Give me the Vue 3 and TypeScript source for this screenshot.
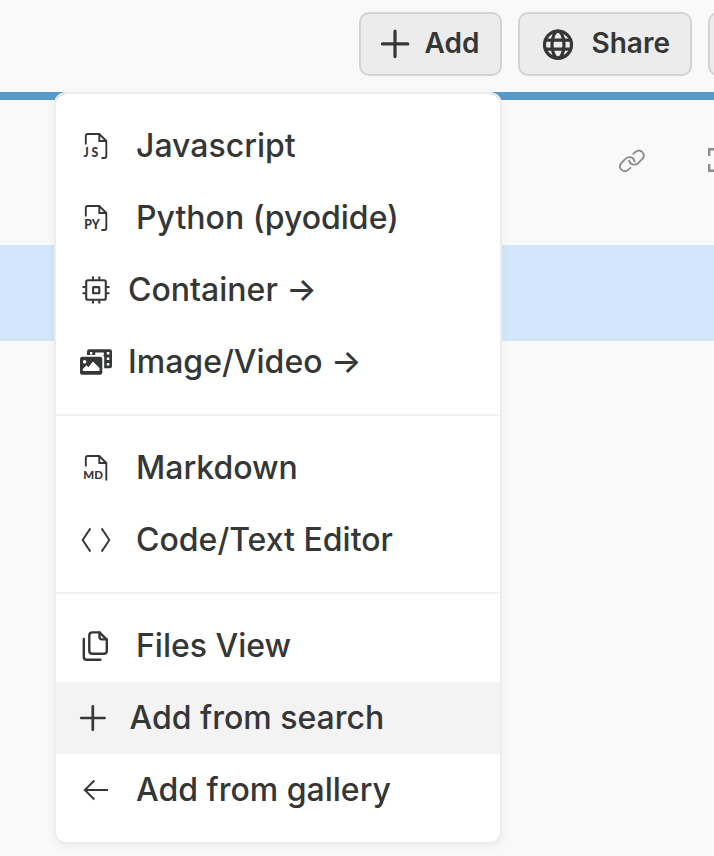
<script setup lang="ts">
type IconName = 'js' | 'py' | 'chip' | 'media' | 'md' | 'code' | 'files' | 'plus' | 'back'

interface MenuItem {
  icon: IconName
  label: string
  offset: 'near' | 'mid' | 'far'
  active?: boolean
}

const groups: MenuItem[][] = [
  [
    { icon: 'js', label: 'Javascript', offset: 'far' },
    { icon: 'py', label: 'Python (pyodide)', offset: 'far' },
    { icon: 'chip', label: 'Container →', offset: 'near' },
    { icon: 'media', label: 'Image/Video →', offset: 'near' },
  ],
  [
    { icon: 'md', label: 'Markdown', offset: 'far' },
    { icon: 'code', label: 'Code/Text Editor', offset: 'far' },
  ],
  [
    { icon: 'files', label: 'Files View', offset: 'far' },
    { icon: 'plus', label: 'Add from search', offset: 'mid', active: true },
    { icon: 'back', label: 'Add from gallery', offset: 'far' },
  ],
]
</script>

<template>
  <div class="page">
    <header class="toolbar">
      <button class="btn add">
        <svg class="btn-icon" viewBox="0 0 32 32"><path d="M16 3.2v25.4M3.4 15.9h25.4" stroke-width="3.2" /></svg>
        <span>Add</span>
      </button>
      <button class="btn share">
        <svg class="btn-icon" viewBox="0 0 32 32">
          <g stroke-width="3.2">
            <circle cx="16" cy="16.7" r="13.5" />
            <ellipse cx="16" cy="16.7" rx="6" ry="13.5" />
            <path d="M3.3 12.2h25.4M3.3 21.2h25.4" />
          </g>
        </svg>
        <span>Share</span>
      </button>
      <button class="btn more"></button>
    </header>
    <div class="accent"></div>
    <div class="cell-tools">
      <svg class="link" viewBox="0 0 26 24">
        <path d="M13.7 5.3 16.4 2.9C21.6-.9 27.4 5.2 23.3 10L19.3 14C15.9 17.2 10.4 15.6 10 10.9" />
        <path d="M11.9 18.3 9.2 20.9C4.2 24.6-1.6 18.9 2.3 14.2L6.7 9.6C10 6.6 15.3 8.2 15.7 13.2" />
      </svg>
      <svg class="expand" viewBox="0 0 24 24"><path d="M8 1.2H1.2V8M1.2 16v6.8H8" /></svg>
    </div>
    <div class="selection"></div>

    <nav class="menu">
      <div v-for="(group, index) in groups" :key="index" class="group">
        <div v-for="item in group" :key="item.label" class="item" :class="[item.offset, { active: item.active }]">
          <svg class="icon" viewBox="0 0 32 32">
            <g v-if="item.icon === 'js' || item.icon === 'py' || item.icon === 'md'">
              <path v-if="item.icon === 'md'" d="M5.8 14.6V6Q5.8 4 7.8 4H19.3L26.3 11V28.6" />
              <path v-else d="M5.8 14.4V6Q5.8 4 7.8 4H19.3L26.3 11V26Q26.3 28 24.3 28H21.4" />
              <path d="M19.3 4v7h7" />
              <text v-if="item.icon === 'js'" x="3.6 11.6" y="27.1">JS</text>
              <text v-else-if="item.icon === 'py'" x="4.2" y="26.8" textLength="15.6">PY</text>
              <text v-else class="small" x="3.3" y="27" textLength="19.6" lengthAdjust="spacingAndGlyphs">MD</text>
            </g>
            <g v-else-if="item.icon === 'chip'" class="medium-square">
              <rect x="6.2" y="6.2" width="19.6" height="19.6" rx="1.8" />
              <rect x="13.1" y="13.1" width="6.2" height="6.2" rx=".5" />
              <path d="M13 2.5v3M19.3 2.5v3M13 26.5v3M19.3 26.5v3M2.5 13h3M2.5 19.3h3M26.5 13h3M26.5 19.3h3" />
            </g>
            <g v-else-if="item.icon === 'media'" class="solid">
              <path fill-rule="evenodd" d="M9.2 3.3H29.8Q32 3.3 32 5.5V20Q32 22.3 29.8 22.3H24.2V10.8Q24.2 9 22.2 9H7V5.5Q7 3.3 9.2 3.3ZM10 6v2.6h2.4V6ZM15.2 6.6v2.4H23.8V6.6ZM26.8 6v2.5h2.6V6ZM26.8 11.5V14h2.6v-2.5ZM26.8 17v2.5h2.6V17Z" />
              <path fill-rule="evenodd" d="M2.2 10.8H20.1Q22.3 10.8 22.3 13V26.5Q22.3 28.7 20.1 28.7H2.2Q0 28.7 0 26.5V13Q0 10.8 2.2 10.8ZM4.6 14.1a1.7 1.7 0 1 0 .01 0ZM2.8 25H19.5V22L13 15.5 8.4 21.3 6.5 19.2 2.8 23Z" />
            </g>
            <path v-else-if="item.icon === 'code'" d="M10.4 4.4 2.7 16l7.7 11.6M21.6 4.4 29.3 16l-7.7 11.6" />
            <g v-else-if="item.icon === 'files'" class="medium">
              <path d="M19.5 2.4H12.4Q9.3 2.4 9.3 5.5V20.7Q9.3 23.8 12.4 23.8H23.7Q26.8 23.8 26.8 20.7V9.7Z" />
              <path d="M19.5 2.4V6.9Q19.5 9.4 22 9.4H26.8M3.8 9V26.9Q3.8 29.7 6.6 29.7H20.4" />
            </g>
            <path v-else-if="item.icon === 'plus'" class="heavy" d="M12.8 4.3v23.4M1.2 16h23.4" />
            <path v-else d="M28 16H4.8M14.3 6.5 4.8 16l9.5 9.5" />
          </svg>
          <span>{{ item.label }}</span>
        </div>
      </div>
    </nav>
  </div>
</template>

<style>
body {
  background: #f9f9f9;
  overflow: hidden;
}
</style>

<style scoped>
.page {
  position: relative;
  width: 714px;
  height: 856px;
  overflow: hidden;
  background: #f9f9f9;
  color: #353636;
  font-family: Inter, "Liberation Sans", sans-serif;
}
.toolbar {
  display: flex;
  gap: 16px;
  height: 92px;
  padding: 12px 0 0 359px;
  box-sizing: border-box;
}
.btn {
  display: flex;
  align-items: center;
  flex: none;
  box-sizing: border-box;
  height: 64px;
  padding: 0 0 2px 18px;
  border: 2px solid #d3d3d3;
  border-radius: 10px;
  background: #ececec;
  color: inherit;
  font: 600 28px/34px Inter, "Liberation Sans", sans-serif;
}
.add { width: 143px; }
.share { width: 174px; padding-left: 22px; }
.more { width: 140px; }
.btn-icon {
  flex: none;
  width: 32px;
  height: 32px;
  margin: 2px 13.5px 0 0;
  fill: none;
  stroke: currentColor;
  stroke-linecap: round;
}
.share .btn-icon { margin-right: 17.5px; }
.share .btn-icon path { stroke-linecap: butt; }
.accent {
  height: 8px;
  background: #569bca;
}
.cell-tools {
  display: flex;
  gap: 63px;
  height: 145px;
  padding: 48px 0 0 619px;
  box-sizing: border-box;
  fill: none;
  stroke: #8b8b8b;
}
.link {
  flex: none;
  width: 26px;
  height: 24px;
  margin-top: 1px;
  stroke-width: 1.8;
}
.expand {
  flex: none;
  width: 24px;
  height: 24px;
  stroke-width: 2.4;
}
.selection {
  height: 96px;
  background: #d4e6fc;
}
.menu {
  position: absolute;
  top: 92px;
  left: 54px;
  box-sizing: border-box;
  width: 448px;
  border: 2px solid #ededed;
  border-radius: 12px;
  background: #fff;
  background-clip: padding-box;
  box-shadow: 0 3px 8px rgba(0, 0, 0, 0.05);
}
.group {
  padding: 16px 0;
}
.group + .group {
  border-top: 2px solid #f0f0f0;
}
.item {
  display: flex;
  align-items: center;
  height: 72px;
  padding-left: 24px;
  font-size: 32px;
  font-weight: 500;
  line-height: 40px;
  white-space: nowrap;
}
.near { gap: 16px; }
.mid { gap: 17.5px; }
.far { gap: 24px; }
.active {
  background: #f3f3f3;
}
.icon {
  flex: none;
  width: 32px;
  height: 32px;
  overflow: visible;
  fill: none;
  stroke: currentColor;
  stroke-width: 1.9;
}
.icon text {
  fill: currentColor;
  stroke: none;
  font: 900 12.2px Lato, sans-serif;
}
.icon .small { font-size: 11.4px; }
.icon .solid { fill: currentColor; stroke: none; }
.icon .medium-square { stroke-width: 2.1; }
.icon .medium { stroke-width: 2.4; stroke-linecap: round; stroke-linejoin: round; }
.icon .heavy { stroke-width: 2.7; stroke-linecap: round; }
</style>
